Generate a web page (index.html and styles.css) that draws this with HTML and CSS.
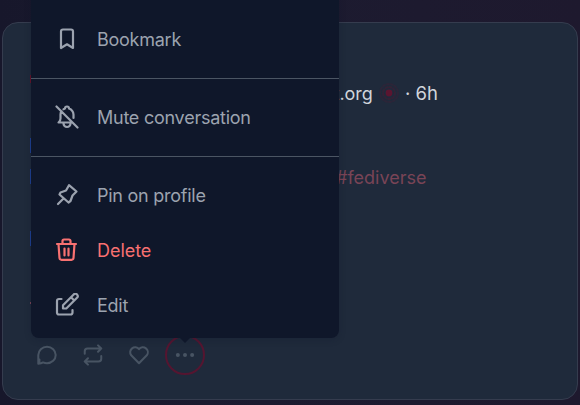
FILE: index.html
```html
<!DOCTYPE html>
<html lang="en">
<head>
<meta charset="utf-8">
<title>Post menu</title>
<link rel="stylesheet" href="styles.css">
</head>
<body>
<article class="card">
  <header class="meta">
    <span>t.org</span>
    <svg class="virus" viewBox="0 0 24 24"><circle cx="12" cy="12" r="3.4"/><circle class="ring" cx="12" cy="12" r="6"/><circle class="ring outer" cx="12" cy="12" r="9"/></svg>
    <span class="age">· 6h</span>
  </header>
  <p class="tag">#fediverse</p>
  <footer class="actions">
    <span class="action"><svg viewBox="0 0 24 24"><path d="M2.500 21.500v-9.500a9.500 9 0 1 1 9.500 9c-1.800 0-3-.3-4.300-.9-1.200.9-2.900 1.400-5.200 1.400 1.300-1.500 1.600-3 1.300-4.500"/></svg></span>
    <span class="action"><svg viewBox="0 0 24 24"><path d="M3 10.500V8a3 3 0 0 1 3-3h15M17.500 1.500 21 5l-3.500 3.500M21 13v3a3 3 0 0 1-3 3H3M6.500 15.500 3 19l3.500 3.500"/></svg></span>
    <span class="action"><svg viewBox="0 0 24 24"><path d="M20.500 12.300 12 21l-8.500-8.700A5.200 5.200 0 1 1 12 5.700a5.200 5.200 0 1 1 8.500 6.600"/></svg></span>
    <span class="action active"><svg class="dots" viewBox="0 0 24 24"><circle cx="4.200" cy="12" r="2.200"/><circle cx="12" cy="12" r="2.200"/><circle cx="19.800" cy="12" r="2.200"/></svg></span>
  </footer>
</article>
<i class="edge avatar"></i><i class="edge link one"></i><i class="edge link two"></i><i class="edge link three"></i><i class="edge dot"></i>
<nav class="menu">
  <a class="item"><svg viewBox="0 0 24 24"><path d="M18 21l-6-3.700L6 21V4.500a2 2 0 0 1 2-2h8a2 2 0 0 1 2 2z"/></svg>Bookmark</a>
  <hr>
  <a class="item"><svg viewBox="0 0 24 24"><path d="m1.500 1.500 21 21M8.500 4.200 10 3.500a2 2 0 0 1 4 0 7 7 0 0 1 4.500 6v3.500M17.500 17.500H3.500c1.500-1.200 2-2 2-4v-4c0-1.300.3-2.300 1-3.300M8.500 17.500v1a3.500 3.500 0 0 0 7 0v-1"/></svg>Mute conversation</a>
  <hr>
  <a class="item"><svg viewBox="0 0 24 24"><path d="M14 2.200 21.500 8.500 17.500 12.500 15.500 18 13.500 19.500 4.500 11.500 5.500 9.500 11 7.500zM8.500 15.500 3 21"/></svg>Pin on profile</a>
  <a class="item danger"><svg viewBox="0 0 24 24"><path d="M2 6h19M3.500 6l1 14a2 2 0 0 0 2 1.800h10a2 2 0 0 0 2-1.800l1-14M7.500 6V3a1.500 1.500 0 0 1 1.500-1.500h5A1.500 1.500 0 0 1 15.500 3v3M9.500 10.500v7M13.500 10.500v7"/></svg>Delete</a>
  <a class="item"><svg viewBox="0 0 24 24"><path d="M6.500 6H4a2 2 0 0 0-2 2v11.500a2 2 0 0 0 2 2h11.500a2 2 0 0 0 2-2V17M8 15.500h3.300L22 4.800a2.300 2.300 0 0 0-3.300-3.300L8 12.200zM16 4.200l3.300 3.300"/></svg>Edit</a>
</nav>
</body>
</html>
```
FILE: styles.css
```css
* { box-sizing: border-box; }
body {
  margin: 0;
  height: 405px;
  padding: 22px 2px 5px;
  overflow: hidden;
  position: relative;
  background: linear-gradient(90deg, #17172b, #1c1b30 45%, #1e192e);
  font: 18px/27px Inter, "Liberation Sans", sans-serif;
  color: #9ca3af;
}
svg {
  width: 24px;
  height: 24px;
  flex: none;
  fill: none;
  stroke: currentColor;
  stroke-width: 2.2;
  stroke-linecap: round;
  stroke-linejoin: round;
}
.card {
  height: 378px;
  display: flex;
  flex-direction: column;
  padding: 57px 24px 24px;
  border: 1px solid #353c4e;
  border-radius: 16px;
  background: #1f2a3b;
}
.meta {
  display: flex;
  align-items: center;
  gap: 4px;
  padding-left: 306.5px;
  color: #d1d5db;
}
.virus { color: #5b1530; margin-top: -1px; }
.virus circle { fill: currentColor; stroke: none; }
.virus .ring { fill: none; stroke: #3c2035; stroke-width: 2; stroke-dasharray: 2 2; opacity: .7; }
.virus .outer { opacity: .45; }
.age { font-size: 18.5px; }
.tag {
  margin: 57px 0 0;
  padding-left: 309px;
  color: #794456;
}
.actions {
  display: flex;
  gap: 6px;
  margin-top: auto;
  color: #485463;
}
.action {
  width: 40px;
  height: 40px;
  display: grid;
  place-items: center;
  border: 2px solid transparent;
  border-radius: 50%;
}
.action svg { width: 22px; height: 22px; }
.active { border-color: #551530; }
.dots circle { fill: currentColor; stroke: none; }
.menu {
  position: absolute;
  left: 31px;
  top: -10px;
  width: 308px;
  height: 348px;
  padding: 22px 0 5px;
  border-radius: 0 0 8px 8px;
  background: #0f172a;
  box-shadow: 0 2px 6px rgba(15, 23, 42, .25);
  letter-spacing: -.25px;
}
.menu::after {
  content: "";
  position: absolute;
  left: 149px;
  top: 100%;
  border: 5px solid transparent;
  border-top-color: #0f172a;
  border-bottom: 0;
}
.menu hr {
  height: 1px;
  margin: 11px 0;
  border: 0;
  background: #4b5563;
}
.item {
  height: 55px;
  display: flex;
  align-items: center;
  gap: 18px;
  padding-left: 24px;
}
.item svg { margin-top: -1px; }
.danger { color: #f87171; letter-spacing: -.05px; }
.edge { position: absolute; left: 30px; width: 1px; height: 15px; }
.link { background: #1e3f91; }
.one { top: 138px; }
.two { top: 169px; }
.three { top: 231px; }
.avatar { top: 75px; height: 8px; background: #651329; }
.dot { top: 302px; height: 2px; background: #794456; }
```
